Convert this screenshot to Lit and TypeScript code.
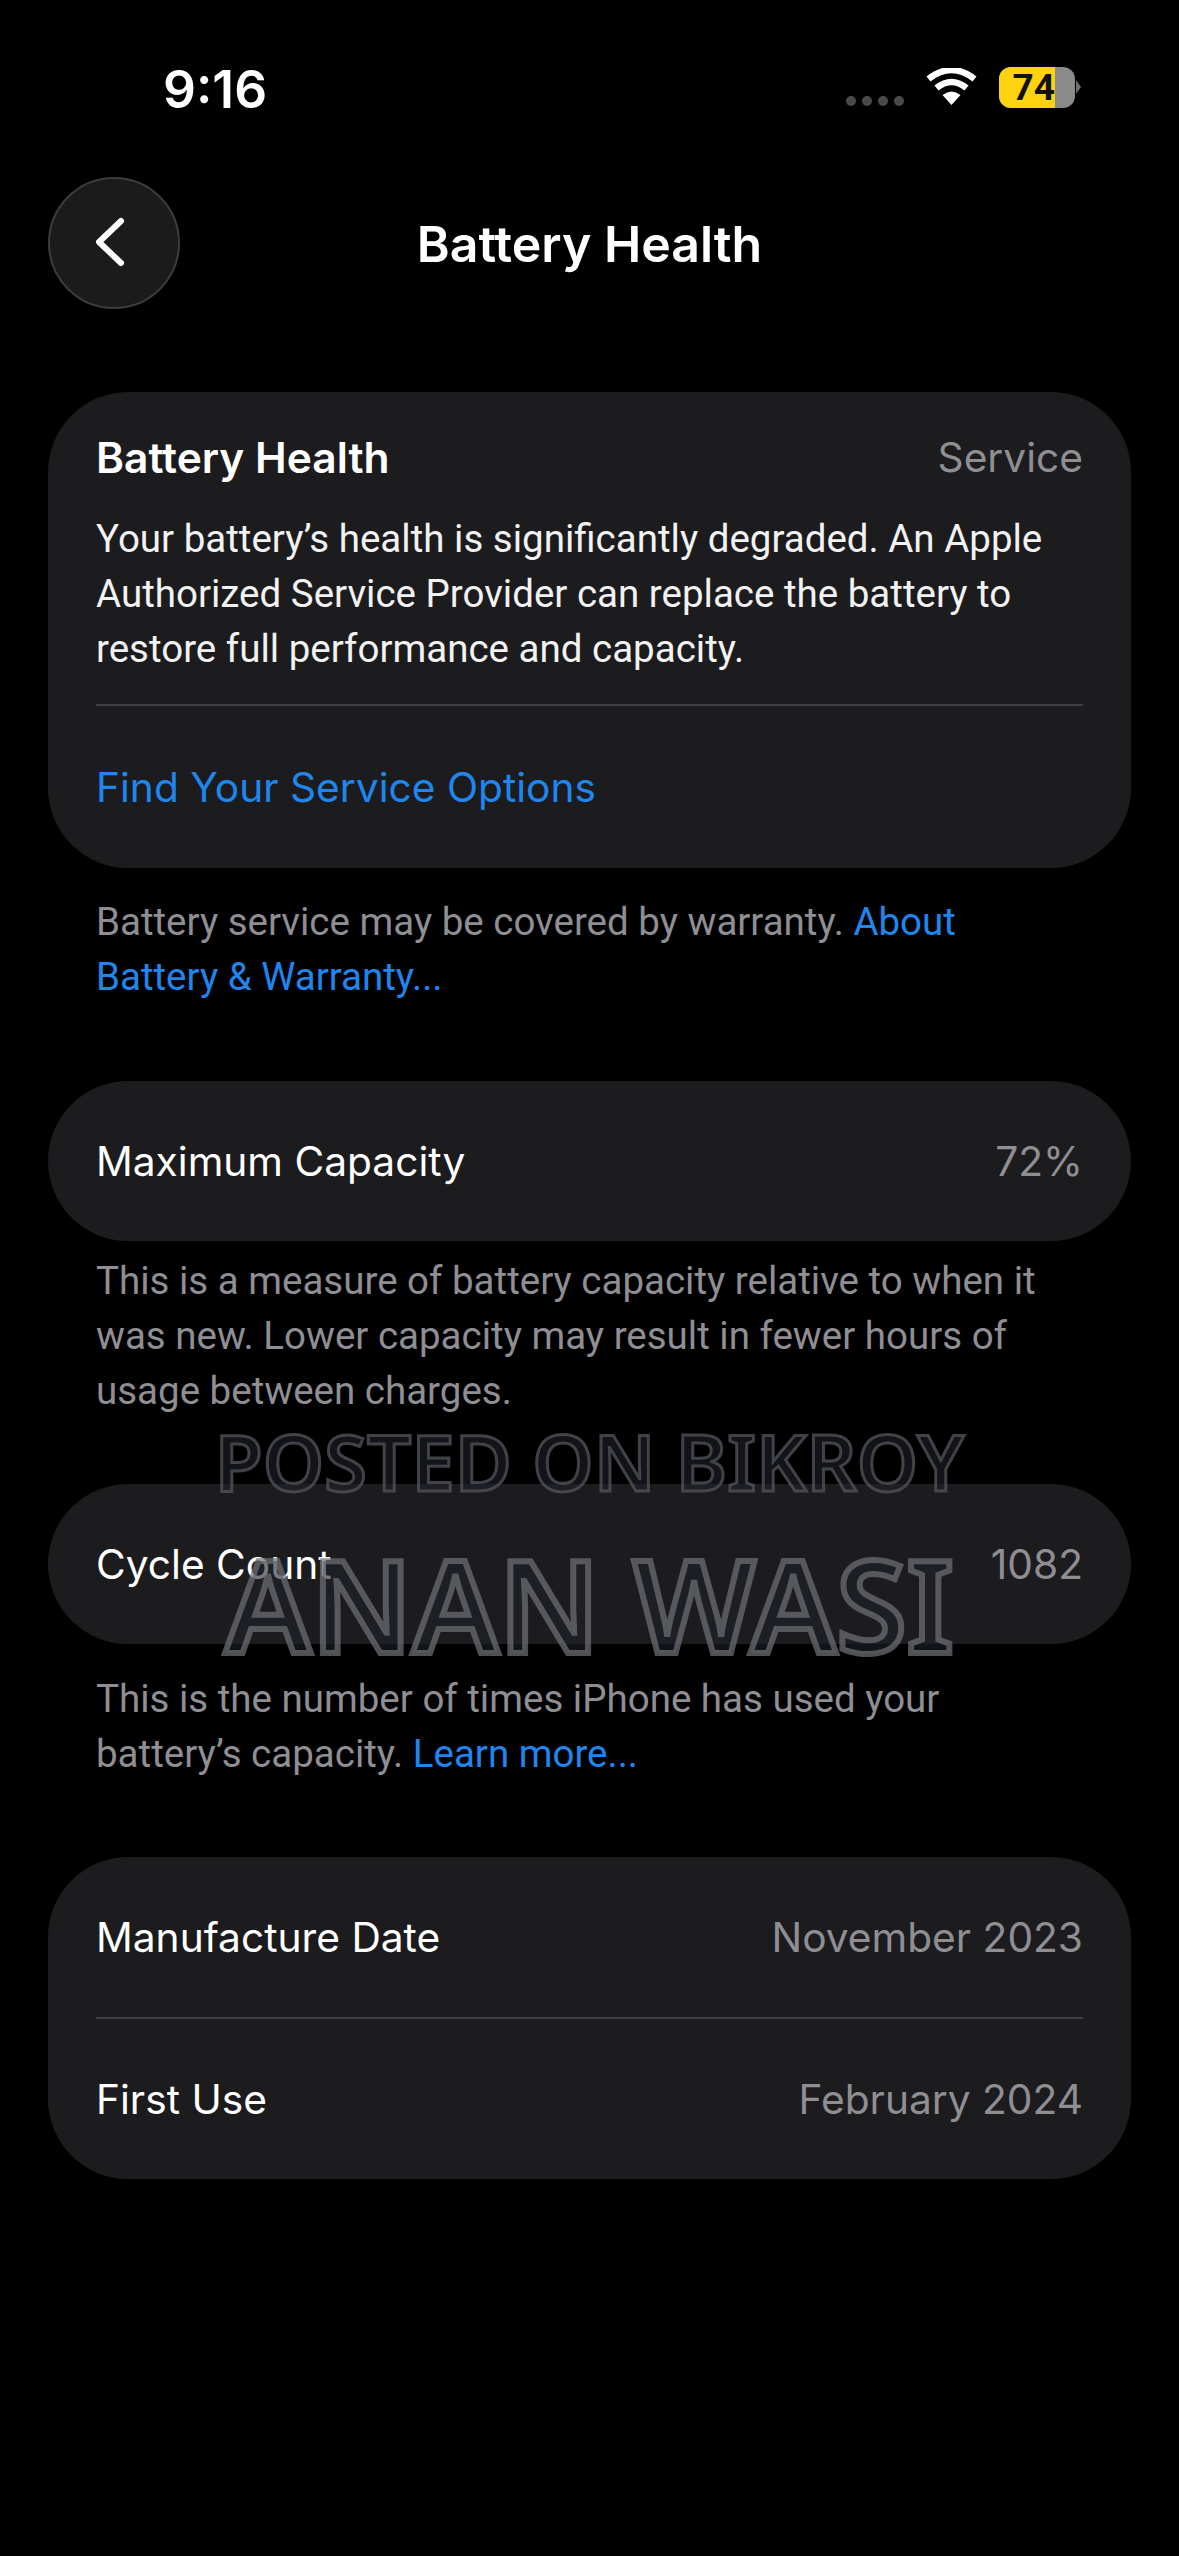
import { LitElement, html, css } from "lit";
import { customElement } from "lit/decorators.js";

@customElement("app-root")
export class AppRoot extends LitElement {
  static styles = css`
    :host { display: block; width: 1179px; height: 2556px; background: #000; position: relative; overflow: hidden;
      font-family: Inter, "Liberation Sans", sans-serif; color: #fff; font-size: 40.7px; }
    .status { height: 177px; box-sizing: border-box; display: flex; align-items: flex-start; justify-content: space-between; padding: 54px 0 0 163px; }
    .time { font-size: 51.5px; font-weight: 600; line-height: 70px; width: 104px; white-space: nowrap; }
    .sys { display: flex; align-items: center; height: 66px; padding-right: 98px; }
    .dots { display: flex; gap: 6px; margin-right: 22px; margin-top: 28px; }
    .dots i { width: 10px; height: 10px; border-radius: 50%; background: #4a4a4a; display: block; }
    .wifi { width: 51px; height: 38px; margin-right: 22px; }
    .batt { width: 76px; height: 41px; border-radius: 12px; background: #8a8a8a; display: flex; }
    .batt-fill { width: 56px; background: #fdd20e; border-radius: 12px 0 0 12px; color: #111; font-family: Roboto, Inter, sans-serif; font-size: 37px; font-weight: 700; line-height: 41px; text-align: right; box-sizing: border-box; white-space: nowrap; }
    .nub { width: 5px; height: 14px; margin-left: 1px; background: #6e6e6e; clip-path: polygon(0 0, 100% 50%, 0 100%); }
    .nav { height: 215px; padding: 0 48px; position: relative; display: flex; align-items: flex-start; }
    .back { width: 132px; height: 132px; box-sizing: border-box; border-radius: 50%; background: #1b1b1b; border: 2px solid #3c3c3c; display: flex; align-items: center; justify-content: center; }
    .back svg { width: 36px; height: 54px; margin-right: 8px; }
    .title { position: absolute; left: 0; right: 0; top: 36px; line-height: 62px; text-align: center; font-size: 50px; font-weight: 600; }
    .card { margin: 0 48px; background: #1c1c1e; border-radius: 80px; padding: 0 48px; }
    .row { display: flex; justify-content: space-between; align-items: center; height: 160px; white-space: nowrap; line-height: 54px; padding-top: 1px; box-sizing: border-box; }
    .val { color: #8e8e93; }
    .health-head { display: flex; justify-content: space-between; align-items: center; padding-top: 38px; line-height: 55px; }
    .health-head b { font-weight: 600; font-size: 42.5px; }
    .health-p { margin: 26px 0 0; font-family: Roboto, Inter, sans-serif; font-size: 38.5px; line-height: 55px; color: #f2f2f2; white-space: nowrap; }
    .divider { height: 2px; background: #3f3f41; margin-top: 28px; }
    .split { height: 2px; background: #3f3f41; }
    .svc { height: 162px; display: flex; align-items: center; color: #1f86ee; }
    .note { margin: 0 48px; padding: 26px 48px 0; font-family: Roboto, Inter, sans-serif; font-size: 38.5px; line-height: 55px; color: #8e8e93; white-space: nowrap; }
    .note a { color: #1f86ee; }
    .note.tight { padding-top: 12px; }
    .note.third { padding-top: 27px; }
    .gap-a { height: 77px; }
    .gap-b { height: 66px; }
    .gap-c { height: 76px; }
    .wm { position: absolute; left: 0; right: 0; text-align: center; font-family: "Noto Sans", "Open Sans", sans-serif; font-weight: 600; color: rgba(30,34,42,.6); white-space: nowrap; pointer-events: none; }
    .wm1 { top: 1411px; font-size: 78px; line-height: 100px; -webkit-text-stroke: 3px rgba(84,86,92,.75); }
    .wm2 { top: 1534px; font-size: 128px; line-height: 140px; -webkit-text-stroke: 6px rgba(112,114,118,.7); }
  `;

  render() {
    return html`
      <div class="status">
        <div class="time">9:16</div>
        <div class="sys">
          <div class="dots"><i></i><i></i><i></i><i></i></div>
          <svg class="wifi" viewBox="0 0 51 38">
            <path d="M25.5 37 L16.5 27 Q25.5 20 34.5 27 Z" fill="#fff"/>
            <path d="M10.5 20 Q25.5 8 40.5 20" fill="none" stroke="#fff" stroke-width="6.5"/>
            <path d="M2.5 11 Q25.5 -7 48.5 11" fill="none" stroke="#fff" stroke-width="6.5"/>
          </svg>
          <div class="batt"><div class="batt-fill">74</div></div>
          <div class="nub"></div>
        </div>
      </div>
      <div class="nav">
        <div class="back">
          <svg viewBox="0 0 36 54"><path d="M29 5 L7 26 L29 47" fill="none" stroke="#fff" stroke-width="6" stroke-linecap="round" stroke-linejoin="round"/></svg>
        </div>
        <div class="title">Battery Health</div>
      </div>
      <div class="card">
        <div class="health-head"><b>Battery Health</b><span class="val">Service</span></div>
        <p class="health-p">Your battery’s health is significantly degraded. An Apple<br>Authorized Service Provider can replace the battery to<br>restore full performance and capacity.</p>
        <div class="divider"></div>
        <div class="svc">Find Your Service Options</div>
      </div>
      <div class="note">Battery service may be covered by warranty. <a>About</a><br><a>Battery &amp; Warranty...</a></div>
      <div class="gap-a"></div>
      <div class="card"><div class="row"><span>Maximum Capacity</span><span class="val">72%</span></div></div>
      <div class="note tight">This is a measure of battery capacity relative to when it<br>was new. Lower capacity may result in fewer hours of<br>usage between charges.</div>
      <div class="gap-b"></div>
      <div class="card"><div class="row"><span>Cycle Count</span><span class="val">1082</span></div></div>
      <div class="note third">This is the number of times iPhone has used your<br>battery’s capacity. <a>Learn more...</a></div>
      <div class="gap-c"></div>
      <div class="card">
        <div class="row"><span>Manufacture Date</span><span class="val">November 2023</span></div>
        <div class="split"></div>
        <div class="row"><span>First Use</span><span class="val">February 2024</span></div>
      </div>
      <div class="wm wm1">POSTED ON BIKROY</div>
      <div class="wm wm2">ANAN WASI</div>
    `;
  }
}
